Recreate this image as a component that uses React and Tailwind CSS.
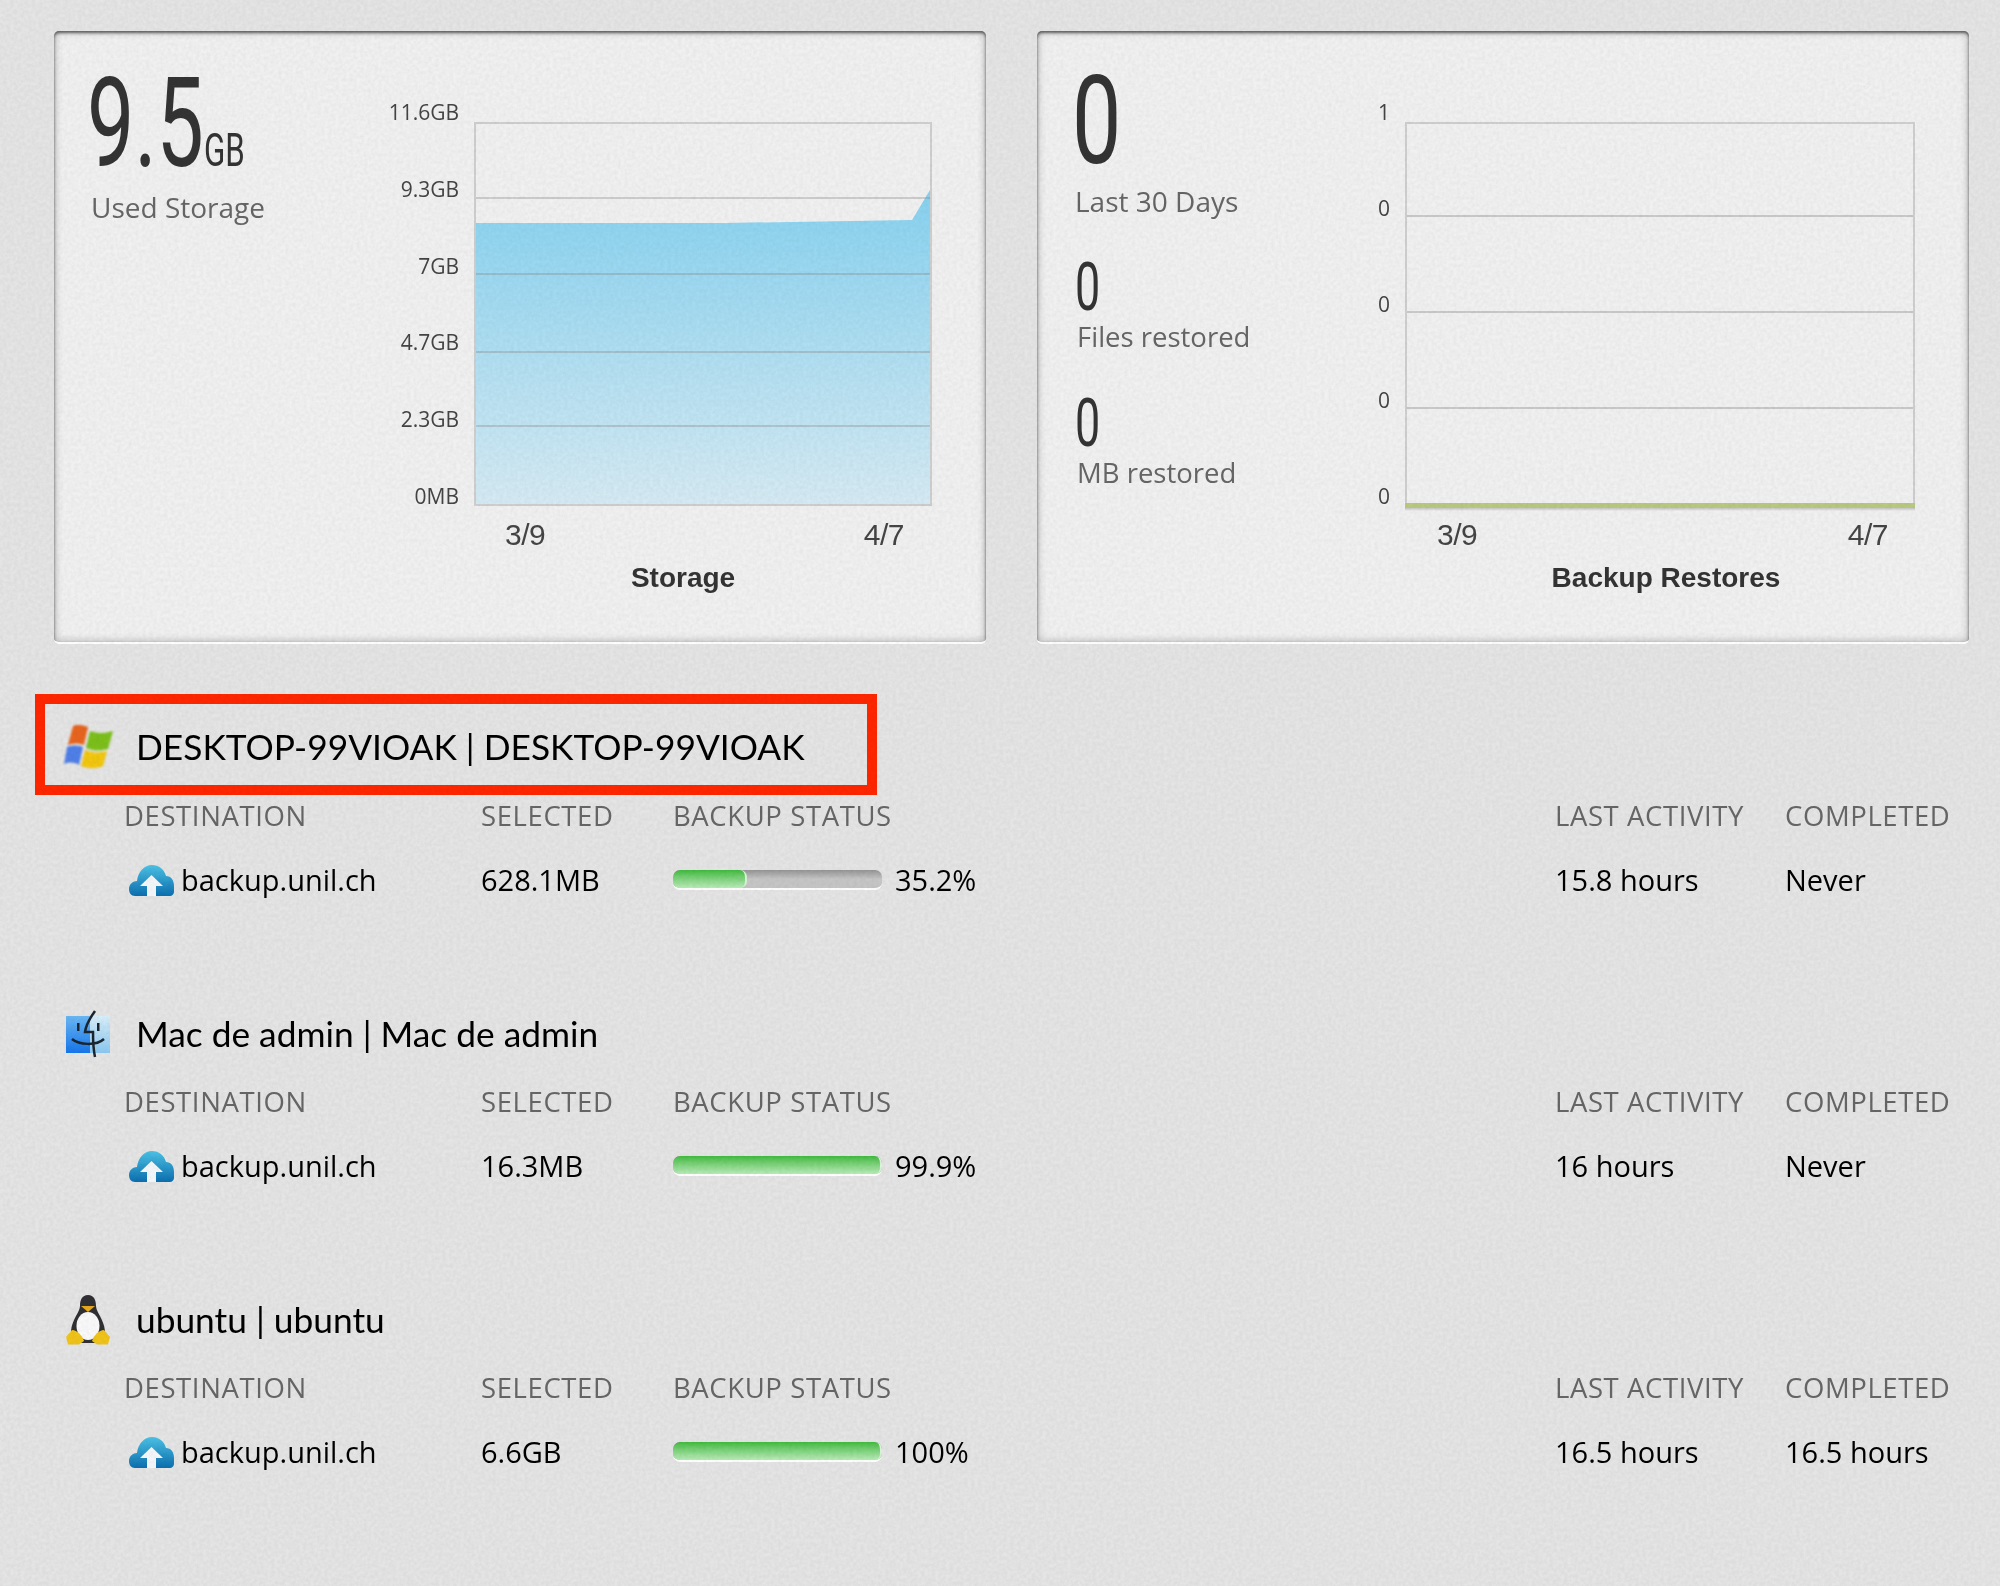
import React from "react";

const sans = "font-['Open_Sans','Noto_Sans',sans-serif]";

const hosts = [
  { name: "DESKTOP-99VIOAK | DESKTOP-99VIOAK", os: "windows", selected: "628.1MB", pct: 35.2, pctLabel: "35.2%", last: "15.8 hours", done: "Never", marked: true },
  { name: "Mac de admin | Mac de admin", os: "mac", selected: "16.3MB", pct: 99.9, pctLabel: "99.9%", last: "16 hours", done: "Never" },
  { name: "ubuntu | ubuntu", os: "linux", selected: "6.6GB", pct: 100, pctLabel: "100%", last: "16.5 hours", done: "16.5 hours" },
];

const WindowsIcon = () => (
  <svg width="50" height="44" viewBox="0 0 50 44" className="blur-[0.8px]">
    <path d="M9 1c5-2 10-1 15 1l-4 18c-6-2-11-2-16 0z" fill="#e8641e" />
    <path d="M26 6c6 2 13 3 23 0l-5 18c-8 2-15 2-22-1z" fill="#7cc01a" />
    <path d="M3 22c6-2 11-2 16 0l-4 18c-5-3-10-3-15-1z" fill="#4f7fe8" />
    <path d="M21 25c7 3 14 3 22 1l-4 15c-7 3-14 3-22 0z" fill="#f2c70e" />
  </svg>
);

const MacIcon = () => (
  <svg width="44" height="48" viewBox="0 0 44 48" className="ml-[2px] blur-[0.5px]">
    <defs>
      <linearGradient id="finderLeft" x1="0" y1="0" x2="0" y2="1">
        <stop offset="0" stopColor="#6bb8f5" />
        <stop offset="1" stopColor="#1576ec" />
      </linearGradient>
      <linearGradient id="finderRight" x1="0" y1="0" x2="0" y2="1">
        <stop offset="0" stopColor="#d7effa" />
        <stop offset="1" stopColor="#8cc8f2" />
      </linearGradient>
    </defs>
    <rect x="0" y="6" width="24" height="37" fill="url(#finderLeft)" />
    <rect x="24" y="6" width="20" height="37" fill="url(#finderRight)" />
    <path d="M29 1c-5 7-9 13-10 21h8c0 8 0 16 2 25" fill="none" stroke="#1a2530" strokeWidth="2.5" />
    <path d="M6 29c7 6 24 7 32 0" fill="none" stroke="#1a2530" strokeWidth="2.5" />
    <rect x="11" y="13" width="2.5" height="8" fill="#1a2530" />
    <rect x="31" y="13" width="2.5" height="8" fill="#1a2530" />
  </svg>
);

const LinuxIcon = () => (
  <svg width="44" height="50" viewBox="0 0 44 50" className="ml-[2px] blur-[0.6px]">
    <path d="M22 0c6 0 8 5 8 11 0 6 8 13 9 25l-6 12H11L5 36C6 24 14 17 14 11c0-6 2-11 8-11z" fill="#303034" />
    <ellipse cx="22" cy="31" rx="11.500" ry="14" fill="#fafafa" />
    <path d="M15 11h14l-7 6z" fill="#e8a91c" />
    <path d="M0 42 6 35c5 0 10 5 12 11l-5 3.500H2z" fill="#f0c419" />
    <path d="M44 42l-6-7c-5 0-10 5-12 11l5 3.500h11z" fill="#f0c419" />
  </svg>
);

const CloudIcon = () => (
  <svg width="45" height="31" viewBox="0 0 45 31">
    <defs>
      <linearGradient id="cloudFill" x1="0" y1="0" x2="0" y2="1">
        <stop offset="0" stopColor="#4cc3e6" />
        <stop offset="1" stopColor="#0b6fb0" />
      </linearGradient>
    </defs>
    <path d="M6 31c-4 0-6-3-6-7 0-5 4-8 8-8 1-9 7-16 15-16 7 0 12 4 14 11 5 0 8 4 8 10v6c0 2-2 4-4 4z" fill="url(#cloudFill)" />
    <path d="M22.500 10 34 21h-7v10h-9V21h-7z" fill="#f4f8fa" />
  </svg>
);

const osIcons = { windows: WindowsIcon, mac: MacIcon, linux: LinuxIcon };

const ProgressBar = ({ pct }) => (
  <div className="h-[20px] w-[209px] overflow-hidden rounded-[7px] border-b-2 border-white bg-gradient-to-b from-[#959595] to-[#c6c6c6] to-50%">
    <div
      className="h-full rounded-[7px] border-r-2 border-[#d8f5d8] bg-gradient-to-b from-[#3dbb3d] to-[#b9ecb9]"
      style={{ width: `${pct}%` }}
    />
  </div>
);

const Chart = ({ labels, labelWidth, plotWidth, titleClass, title, xClass, children }) => (
  <div className="flex pt-[71px]">
    <div className={`${labelWidth} flex h-[404px] flex-col justify-between text-right text-[21px] leading-5 text-[#444] ${sans}`}>
      {labels.map((l, i) => (
        <span key={i}>{l}</span>
      ))}
    </div>
    <div className={`ml-[15px] pt-[20px] ${plotWidth}`}>
      {children}
      <div className={`mt-[11px] flex justify-between font-['Liberation_Sans',sans-serif] text-[30px] leading-9 tracking-[-0.5px] text-[#444] ${xClass}`}>
        <span>3/9</span>
        <span>4/7</span>
      </div>
      <div className={`mt-[7px] font-['Liberation_Sans',sans-serif] text-[28px] leading-9 font-bold text-[#333] ${titleClass}`}>
        {title}
      </div>
    </div>
  </div>
);

const Card = ({ children }) => (
  <div className="flex h-[613px] w-[932px] rounded-[5px] border-b-2 border-white bg-[#f1f1f1] shadow-[inset_0_2px_3px_rgba(0,0,0,0.55),inset_0_0_9px_rgba(0,0,0,0.3)]">
    {children}
  </div>
);

const BigNumber = ({ children, className }) => (
  <div className={`origin-left font-['Roboto',sans-serif] text-[#333] ${className}`}>
    {children}
  </div>
);

const StorageCard = () => (
  <Card>
    <div className="w-[305px] pl-[33px]">
      <BigNumber className="mt-[48px] w-[160px] scale-x-[0.68] text-[124px] leading-[90px] whitespace-nowrap">
        9.5
        <span className="text-[46px] leading-none">GB</span>
      </BigNumber>
      <div className={`mt-[16px] ml-[4px] text-[28px] leading-9 text-[#666] ${sans}`}>Used Storage</div>
    </div>
    <Chart
      labels={["11.6GB", "9.3GB", "7GB", "4.7GB", "2.3GB", "0MB"]}
      labelWidth="w-[100px]"
      plotWidth="w-[458px]"
      xClass="pr-[28px] pl-[31px]"
      titleClass="pr-[40px] text-center"
      title="Storage"
    >
      <svg width="458" height="384" viewBox="0 0 458 384" className="block">
        <defs>
          <linearGradient id="areaFill" x1="0" y1="0" x2="0" y2="1">
            <stop offset="0" stopColor="#87d2f0" />
            <stop offset="1" stopColor="#d6ebf4" />
          </linearGradient>
        </defs>
        <path d="M0 101 L250 101 L438 98 L456 68 L456 383 L0 383 Z" fill="url(#areaFill)" />
        {[76, 152, 230, 304].map((y) => (
          <line key={y} x1="0" x2="458" y1={y} y2={y} stroke="#8a8a8a" strokeOpacity="0.35" strokeWidth="2" />
        ))}
        <rect x="1" y="1" width="456" height="382" fill="none" stroke="#cfcfcf" strokeWidth="2" />
      </svg>
    </Chart>
  </Card>
);

const RestoreStat = ({ label }) => (
  <div>
    <BigNumber className="ml-[3px] scale-x-[0.68] text-[66px] leading-[52px]">0</BigNumber>
    <div className={`mt-[5px] ml-[5px] text-[27.500px] leading-9 text-[#666] ${sans}`}>{label}</div>
  </div>
);

const RestoresCard = () => (
  <Card>
    <div className="w-[293px] pl-[35px]">
      <BigNumber className="mt-[46px] scale-x-[0.72] text-[122px] leading-[90px]">0</BigNumber>
      <div className={`mt-[16px] ml-[3px] text-[28px] leading-9 text-[#666] ${sans}`}>Last 30 Days</div>
      <div className="mt-[43px] flex flex-col gap-[43px]">
        <RestoreStat label="Files restored" />
        <RestoreStat label="MB restored" />
      </div>
    </div>
    <Chart
      labels={["1", "0", "0", "0", "0"]}
      labelWidth="w-[60px]"
      plotWidth="w-[510px]"
      xClass="pr-[27px] pl-[32px]"
      titleClass="pl-[12px] text-center"
      title="Backup Restores"
    >
      <svg width="510" height="384" viewBox="0 0 510 384" className="block overflow-visible">
        <defs>
          <linearGradient id="lineShadow" x1="0" y1="0" x2="0" y2="1">
            <stop offset="0" stopColor="#000" stopOpacity="0.25" />
            <stop offset="1" stopColor="#000" stopOpacity="0" />
          </linearGradient>
        </defs>
        {[94, 190, 286].map((y) => (
          <line key={y} x1="0" x2="510" y1={y} y2={y} stroke="#c9c9c9" strokeWidth="2" />
        ))}
        <rect x="1" y="1" width="508" height="382" fill="none" stroke="#cfcfcf" strokeWidth="2" />
        <rect x="0" y="385" width="510" height="4" fill="url(#lineShadow)" />
        <rect x="0" y="381" width="510" height="4" fill="#b9c97f" />
      </svg>
    </Chart>
  </Card>
);

const HostRow = ({ host }) => {
  const Icon = osIcons[host.os];
  return (
    <section className={`relative h-[286px] ${sans}`}>
      {host.marked && (
        <div className="absolute top-[-23px] left-[35px] h-[101px] w-[842px] border-[10px] border-[#ff2600]" />
      )}
      <div className={`flex h-[60px] items-center pl-[64px] ${host.marked ? "" : "translate-y-[1px]"}`}>
        <div className="flex w-[72px]">
          <Icon />
        </div>
        <h2 className="font-['Lato',sans-serif] text-[35.300px] leading-none font-normal text-black">{host.name}</h2>
      </div>
      <div className="mt-[18px] grid h-10 grid-cols-[357px_192px_882px_230px_1fr] items-center pl-[124px] text-[27.500px] tracking-[0.6px] whitespace-nowrap text-[#666]">
        <span>DESTINATION</span>
        <span>SELECTED</span>
        <span>BACKUP STATUS</span>
        <span>LAST ACTIVITY</span>
        <span>COMPLETED</span>
      </div>
      <div className="mt-[20px] grid h-[50px] grid-cols-[357px_192px_882px_230px_1fr] items-center pl-[124px] text-[29px] text-black">
        <span className="flex items-center gap-[7px] pl-[5px]">
          <CloudIcon />
          backup.unil.ch
        </span>
        <span>{host.selected}</span>
        <span className="flex items-center gap-[13px]">
          <ProgressBar pct={host.pct} />
          {host.pctLabel}
        </span>
        <span>{host.last}</span>
        <span>{host.done}</span>
      </div>
    </section>
  );
};

// grain of the paper background, lies over the whole page
const Grain = () => (
  <svg className="pointer-events-none absolute inset-0 h-full w-full opacity-[0.16] mix-blend-multiply">
    <filter id="grain">
      <feTurbulence type="fractalNoise" baseFrequency="0.28" numOctaves="3" seed="4" />
      <feColorMatrix values="0 0 0 0 0.45  0 0 0 0 0.45  0 0 0 0 0.45  1.4 0 0 0 -0.35" />
    </filter>
    <rect width="100%" height="100%" filter="url(#grain)" />
  </svg>
);

export default function App() {
  return (
    <div className="relative h-[1586px] w-[2000px] overflow-hidden bg-[#e5e5e5] pt-[31px]">
      <div className="flex gap-[51px] pl-[54px]">
        <StorageCard />
        <RestoresCard />
      </div>
      <div className="mt-[73px]">
        {hosts.map((host) => (
          <HostRow key={host.os} host={host} />
        ))}
      </div>
      <Grain />
    </div>
  );
}
